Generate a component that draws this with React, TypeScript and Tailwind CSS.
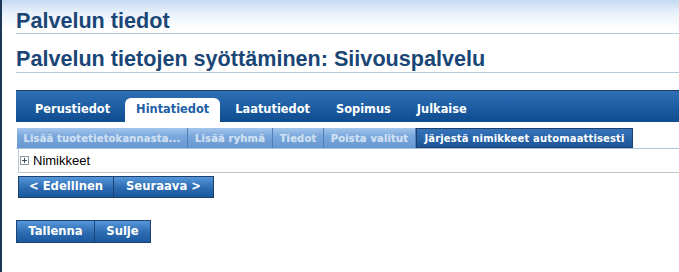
import React from "react";

const sans = { fontFamily: '"DejaVu Sans", Verdana, sans-serif' };
const arial = { fontFamily: '"Liberation Sans", Arial, sans-serif' };

function Tab({ label, active }: { label: string; active?: boolean }) {
  return (
    <div
      className={
        "flex h-[24px] items-center px-[11px] text-[11.4px] font-bold " +
        (active ? "rounded-t-[6px] bg-white text-[#2060a6]" : "text-white")
      }
      style={sans}
    >
      {label}
    </div>
  );
}

function ToolBtn({ label, w, enabled }: { label: string; w: string; enabled?: boolean }) {
  return (
    <div
      className={
        "flex h-[20px] items-center justify-center border-r text-[10px] font-bold tracking-[0.15px] " +
        w +
        " " +
        (enabled
          ? "border border-[#1d3f6d] bg-[linear-gradient(to_bottom,#3775bb,#1a5496)] text-white"
          : "border-[#4f7fb8] bg-[linear-gradient(to_bottom,#a3c6ec_0%,#7aa8dc_40%,#6696d0_100%)] text-[#cfe0f2] [text-shadow:0_0_1px_#9fc0e6]")
      }
      style={sans}
    >
      {label}
    </div>
  );
}

function NavBtn({ label, cls }: { label: string; cls: string }) {
  return (
    <div
      className={
        "flex items-center justify-center border border-[#1f416f] bg-[linear-gradient(to_bottom,#5597da,#2c6bb2_55%,#1b599f)] text-[11.6px] font-bold text-white " +
        cls
      }
      style={sans}
    >
      {label}
    </div>
  );
}

export default function App() {
  return (
    <div className="h-[272px] w-[679px] overflow-hidden border-l-2 border-[#1b3656] bg-[linear-gradient(to_bottom,#c4d9f0_0px,#e6f0fa_12px,#ffffff_28px)]">
      <div className="pl-[14px]">
        <h1
          className="border-b border-[#b3cdd8] pb-[2px] pt-[10px] text-[21.6px] font-bold leading-[21px] text-[#1a4676]"
          style={arial}
        >
          Palvelun tiedot
        </h1>
        <h2
          className="border-b border-[#b3cdd8] pb-[3px] pt-[14px] text-[21.6px] font-bold leading-[21px] text-[#1a4676]"
          style={arial}
        >
          Palvelun tietojen syöttäminen: Siivouspalvelu
        </h2>

        <div className="mt-[17px] flex h-[32px] items-end gap-[4px] border-t border-[#1c3d6b] bg-[linear-gradient(to_bottom,#2f70b7,#1a5a9f_60%,#0f4c8e)] pl-[8px]">
          <Tab label="Perustiedot" />
          <Tab label="Hintatiedot" active />
          <Tab label="Laatutiedot" />
          <Tab label="Sopimus" />
          <Tab label="Julkaise" />
        </div>

        <div className="mt-[6px] flex border-b border-[#a9c4dc] pl-[1px]">
          <ToolBtn label="Lisää tuotetietokannasta..." w="w-[171px]" />
          <ToolBtn label="Lisää ryhmä" w="w-[85px]" />
          <ToolBtn label="Tiedot" w="w-[51px]" />
          <ToolBtn label="Poista valitut" w="w-[92px]" />
          <ToolBtn label="Järjestä nimikkeet automaattisesti" w="w-[217px]" enabled />
        </div>

        <div className="ml-[2px] flex h-[24px] items-center border-b border-l border-[#bcc6ce] pl-[1px]">
          <svg width="9" height="9" viewBox="0 0 9 9" className="shrink-0">
            <rect x="0.5" y="0.5" width="8" height="8" fill="#fff" stroke="#8796a6" />
            <path d="M2 4.5h5M4.5 2v5" stroke="#3a4a5c" strokeWidth="1" />
          </svg>
          <span className="ml-[4px] text-[13px] text-black" style={arial}>
            Nimikkeet
          </span>
        </div>

        <div className="ml-[2px] mt-[3px] flex">
          <NavBtn label="< Edellinen" cls="h-[22px] w-[96px]" />
          <NavBtn label="Seuraava >" cls="h-[22px] w-[100px] border-l-0" />
        </div>

        <div className="mt-[22px] flex">
          <NavBtn label="Tallenna" cls="h-[23px] w-[79px]" />
          <NavBtn label="Sulje" cls="h-[23px] w-[56px] border-l-0" />
        </div>
      </div>
    </div>
  );
}
